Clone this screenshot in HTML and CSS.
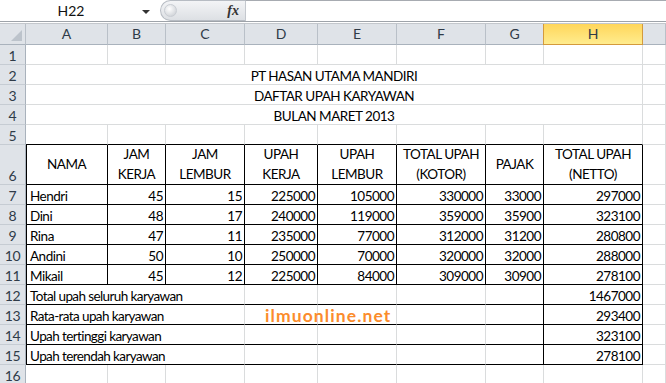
FILE: index.html
```html
<!DOCTYPE html>
<html>
<head>
  <meta charset="utf-8">
  <link rel="stylesheet" href="styles.css">
</head>
<body>
  <div class="formula-bar">
    <div class="name-box">
      <span class="name-value">H22</span>
      <span class="caret"></span>
    </div>
    <div class="fx-box">
      <span class="knob"></span>
      <span class="fx">fx</span>
    </div>
    <div class="formula-input"></div>
  </div>
  <div class="bar-gap"></div>

  <div class="sheet">
    <!-- column headers -->
    <div class="hd corner"><span class="corner-tri"></span></div>
    <div class="hd">A</div>
    <div class="hd">B</div>
    <div class="hd">C</div>
    <div class="hd">D</div>
    <div class="hd">E</div>
    <div class="hd">F</div>
    <div class="hd">G</div>
    <div class="hd sel">H</div>
    <div class="hd"></div>

    <!-- row 1 -->
    <div class="rh">1</div>
    <div class="c"></div><div class="c"></div><div class="c"></div><div class="c"></div>
    <div class="c"></div><div class="c"></div><div class="c"></div><div class="c"></div>
    <div class="c"></div>

    <!-- rows 2-4: titles -->
    <div class="rh">2</div>
    <div class="c title">PT HASAN UTAMA MANDIRI</div>
    <div class="c"></div>
    <div class="rh">3</div>
    <div class="c title">DAFTAR UPAH KARYAWAN</div>
    <div class="c"></div>
    <div class="rh">4</div>
    <div class="c title">BULAN MARET 2013</div>
    <div class="c"></div>

    <!-- row 5 -->
    <div class="rh">5</div>
    <div class="c bb"></div><div class="c bb"></div><div class="c bb"></div><div class="c bb"></div>
    <div class="c bb"></div><div class="c bb"></div><div class="c bb"></div><div class="c bb"></div>
    <div class="c"></div>

    <!-- row 6: table header -->
    <div class="rh tall">6</div>
    <div class="c th bl">NAMA</div>
    <div class="c th">JAM<br>KERJA</div>
    <div class="c th">JAM<br>LEMBUR</div>
    <div class="c th">UPAH<br>KERJA</div>
    <div class="c th">UPAH<br>LEMBUR</div>
    <div class="c th">TOTAL UPAH<br>(KOTOR)</div>
    <div class="c th">PAJAK</div>
    <div class="c th">TOTAL UPAH<br>(NETTO)</div>
    <div class="c"></div>

    <!-- rows 7-11: data -->
    <div class="rh">7</div>
    <div class="c td bl">Hendri</div>
    <div class="c td num">45</div><div class="c td num">15</div>
    <div class="c td num">225000</div><div class="c td num">105000</div>
    <div class="c td num">330000</div><div class="c td num">33000</div>
    <div class="c td num">297000</div>
    <div class="c"></div>

    <div class="rh">8</div>
    <div class="c td bl">Dini</div>
    <div class="c td num">48</div><div class="c td num">17</div>
    <div class="c td num">240000</div><div class="c td num">119000</div>
    <div class="c td num">359000</div><div class="c td num">35900</div>
    <div class="c td num">323100</div>
    <div class="c"></div>

    <div class="rh">9</div>
    <div class="c td bl">Rina</div>
    <div class="c td num">47</div><div class="c td num">11</div>
    <div class="c td num">235000</div><div class="c td num">77000</div>
    <div class="c td num">312000</div><div class="c td num">31200</div>
    <div class="c td num">280800</div>
    <div class="c"></div>

    <div class="rh">10</div>
    <div class="c td bl">Andini</div>
    <div class="c td num">50</div><div class="c td num">10</div>
    <div class="c td num">250000</div><div class="c td num">70000</div>
    <div class="c td num">320000</div><div class="c td num">32000</div>
    <div class="c td num">288000</div>
    <div class="c"></div>

    <div class="rh">11</div>
    <div class="c td bl">Mikail</div>
    <div class="c td num">45</div><div class="c td num">12</div>
    <div class="c td num">225000</div><div class="c td num">84000</div>
    <div class="c td num">309000</div><div class="c td num">30900</div>
    <div class="c td num">278100</div>
    <div class="c"></div>

    <!-- rows 12-15: summary -->
    <div class="rh">12</div>
    <div class="c label bl bb">Total upah seluruh karyawan</div>
    <div class="c bb"></div><div class="c bb"></div><div class="c bb"></div>
    <div class="c bb br"></div>
    <div class="c td num">1467000</div>
    <div class="c"></div>

    <div class="rh">13</div>
    <div class="c label bl bb">Rata-rata upah karyawan</div>
    <div class="c bb"></div><div class="c bb"></div><div class="c bb"></div>
    <div class="c bb br"></div>
    <div class="c td num">293400</div>
    <div class="c"></div>

    <div class="rh">14</div>
    <div class="c label bl bb">Upah tertinggi karyawan</div>
    <div class="c bb"></div><div class="c bb"></div><div class="c bb"></div>
    <div class="c bb br"></div>
    <div class="c td num">323100</div>
    <div class="c"></div>

    <div class="rh">15</div>
    <div class="c label bl bb">Upah terendah karyawan</div>
    <div class="c bb"></div><div class="c bb"></div><div class="c bb"></div>
    <div class="c bb br"></div>
    <div class="c td num">278100</div>
    <div class="c"></div>

    <!-- row 16 -->
    <div class="rh">16</div>
    <div class="c"></div><div class="c"></div><div class="c"></div><div class="c"></div>
    <div class="c"></div><div class="c"></div><div class="c"></div><div class="c"></div>
    <div class="c"></div>

    <div class="watermark">ilmuonline.net</div>
  </div>
</body>
</html>
```

FILE: styles.css
```css
body {
  margin: 0;
  width: 666px;
  height: 383px;
  overflow: hidden;
  background-color: white;
  font-family: Lato, "Noto Sans", sans-serif;
  font-size: 13.5px;
  letter-spacing: -0.5px;
  color: black;
}

/* formula bar */
.formula-bar {
  display: flex;
  height: 21px;
  border-bottom: 1px solid #9ea3a9;
}

.name-box {
  width: 160px;
  display: flex;
  align-items: center;
}

.name-value {
  width: 142px;
  text-align: center;
  font-size: 14px;
  letter-spacing: 0;
  color: #111;
}

.caret {
  width: 0;
  height: 0;
  border-left: 4px solid transparent;
  border-right: 4px solid transparent;
  border-top: 4px solid #333;
  margin-top: 2px;
}

.fx-box {
  width: 85px;
  display: flex;
  align-items: center;
  justify-content: space-between;
  background: linear-gradient(#f3f4f6, #dde0e4);
  border: 1px solid #b7bcc3;
  border-right: none;
  border-radius: 11px 0 0 11px;
  box-sizing: border-box;
  height: 21px;
  padding: 0 6px 0 3px;
}

.knob {
  width: 11px;
  height: 11px;
  border-radius: 50%;
  background: radial-gradient(circle at 40% 35%, #ffffff, #c5c9cf);
  border: 1px solid #c9cdd3;
}

.fx {
  font-family: "Liberation Serif", serif;
  font-style: italic;
  font-weight: bold;
  font-size: 14px;
  letter-spacing: 0;
  color: #333;
}

.formula-input {
  flex: 1;
  border-top: 1px solid #a7abb1;
  border-left: 1px solid #c4c8ce;
}

.bar-gap {
  height: 1px;
  border-bottom: 1px solid #c3c7cc;
}

/* sheet grid */
.sheet {
  position: relative;
  display: grid;
  grid-template-columns: 26px 82px 58px 79px 73px 79px 89px 58px 99px 1fr;
  grid-template-rows: 21px repeat(5, 20px) 40px repeat(10, 20px);
}

.hd {
  background-color: #dfe3e8;
  border-right: 1px solid #b9c0c8;
  border-bottom: 1px solid #a9b2bc;
  text-align: center;
  line-height: 20px;
  color: #2f3b48;
  font-size: 14px;
  letter-spacing: 0;
}

.hd.sel {
  background: linear-gradient(#ffd65a, #ffec8e);
  border: 1px solid #d49a3c;
  border-top: none;
  margin-left: -1px;
}

.corner {
  position: relative;
}

.corner-tri {
  position: absolute;
  right: 3px;
  bottom: 3px;
  width: 0;
  height: 0;
  border-left: 11px solid transparent;
  border-bottom: 11px solid #bcc3cb;
}

.rh {
  background-color: #dfe3e8;
  border-right: 1px solid #a9b2bc;
  border-bottom: 1px solid #c6ccd3;
  text-align: center;
  color: #2f3b48;
  font-size: 14px;
  letter-spacing: -0.3px;
  padding-top: 2px;
  line-height: 18px;
}

.rh.tall {
  padding-top: 22px;
}

.c {
  border-right: 1px solid #dadcdd;
  border-bottom: 1px solid #dadcdd;
  white-space: nowrap;
  padding: 3px 3px 0;
  line-height: 17px;
  min-width: 0;
}

.title {
  grid-column: span 8;
  text-align: center;
}

.bb {
  border-bottom-color: black;
}

.br {
  border-right-color: black;
}

.bl {
  box-shadow: inset 1px 0 0 black;
}

.th {
  display: flex;
  flex-direction: column;
  justify-content: center;
  text-align: center;
  padding: 0;
  line-height: 19.5px;
  border-color: black;
}

.td {
  border-color: black;
  padding-left: 4px;
}

.num {
  text-align: right;
  padding-right: 2px;
}

.label {
  grid-column: span 3;
  padding-left: 4px;
  letter-spacing: -0.6px;
}

.watermark {
  position: absolute;
  left: 265px;
  top: 281px;
  font-weight: bold;
  font-size: 17.5px;
  letter-spacing: 1.1px;
  color: #fb8c2c;
  white-space: nowrap;
}
```
